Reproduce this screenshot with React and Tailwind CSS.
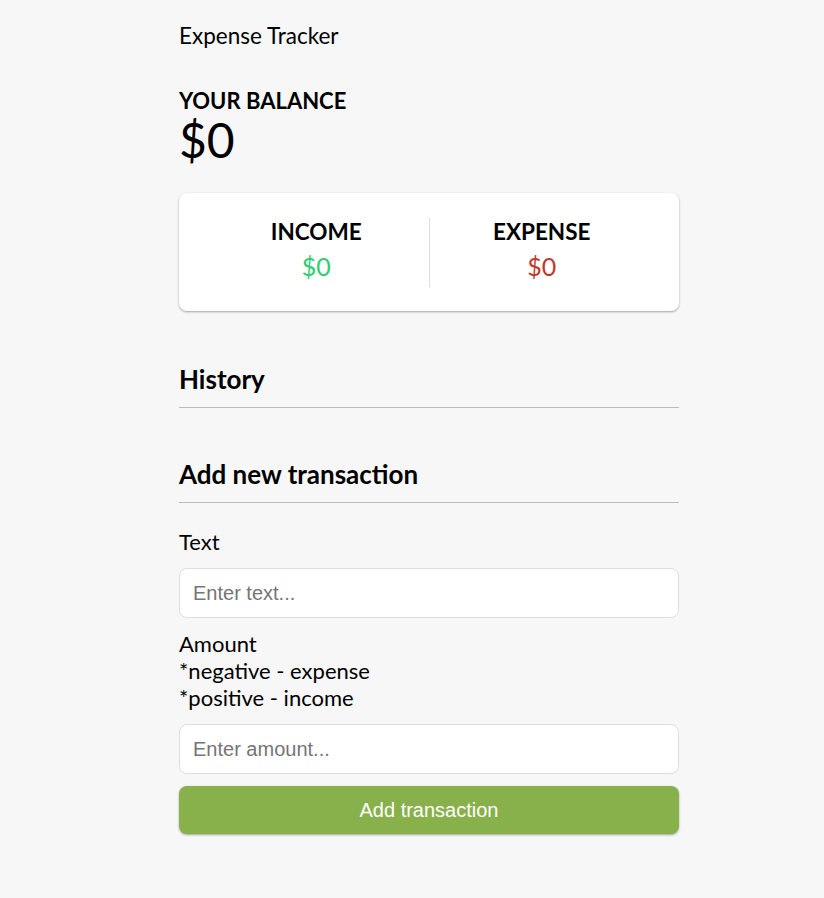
export default function App() {
  return (
    <div className="min-h-[898px] bg-[#f7f7f7] text-black" style={{ fontFamily: 'Lato, "Open Sans", sans-serif' }}>
      <div className="ml-[179px] w-[500px] pt-[22px]">
        <h2 className="text-[22.5px] leading-[28px]">Expense Tracker</h2>

        <h4 className="mt-[37px] text-[22px] font-bold uppercase leading-[28px]">Your Balance</h4>
        <h1 className="text-[48px] leading-[50px]">$0</h1>

        {/* income / expense card */}
        <div className="mt-[28px] flex rounded-lg bg-white px-[25px] pt-[25px] pb-[24px] shadow-[0_1px_3px_rgba(0,0,0,0.12),0_1px_2px_rgba(0,0,0,0.24)]">
          <div className="flex-1 text-center">
            <h4 className="text-[22.5px] font-bold uppercase leading-[28px]">Income</h4>
            <p className="text-[25px] leading-[41px] text-[#2ecc71]">$0</p>
          </div>
          <div className="w-px bg-[#dedede]" />
          <div className="flex-1 text-center">
            <h4 className="text-[22.5px] font-bold uppercase leading-[28px]">Expense</h4>
            <p className="text-[25px] leading-[41px] text-[#c0392b]">$0</p>
          </div>
        </div>

        <h3 className="mt-[53px] border-b border-[#bbb] pb-[13px] text-[26px] font-bold leading-[30px]">History</h3>

        <h3 className="mt-[51px] border-b border-[#bbb] pb-[13px] text-[26px] font-bold leading-[30px]">Add new transaction</h3>

        <form onSubmit={(e) => e.preventDefault()}>
          <label className="mt-[25px] block text-[22px] leading-[27px]">Text</label>
          <input
            type="text"
            placeholder="Enter text..."
            className="mt-[13px] block h-[50px] w-full rounded-lg border border-[#dedede] bg-white px-[13px] text-[20px] outline-none placeholder:text-[#757575]"
            style={{ fontFamily: '"Liberation Sans", Arial, sans-serif' }}
          />

          <label className="mt-[12px] block text-[22px] leading-[27px]">
            Amount
            <br />
            *negative - expense
            <br />
            *positive - income
          </label>
          <input
            type="number"
            placeholder="Enter amount..."
            className="mt-[13px] block h-[50px] w-full rounded-lg border border-[#dedede] bg-white px-[13px] text-[20px] outline-none placeholder:text-[#757575]"
            style={{ fontFamily: '"Liberation Sans", Arial, sans-serif' }}
          />

          <button
            className="mt-[12px] block h-[48px] w-full rounded-lg bg-[#88b04b] text-[20px] text-white shadow-[0_1px_3px_rgba(0,0,0,0.12),0_1px_2px_rgba(0,0,0,0.24)]"
            style={{ fontFamily: '"Liberation Sans", Arial, sans-serif' }}
          >
            Add transaction
          </button>
        </form>
      </div>
    </div>
  )
}
